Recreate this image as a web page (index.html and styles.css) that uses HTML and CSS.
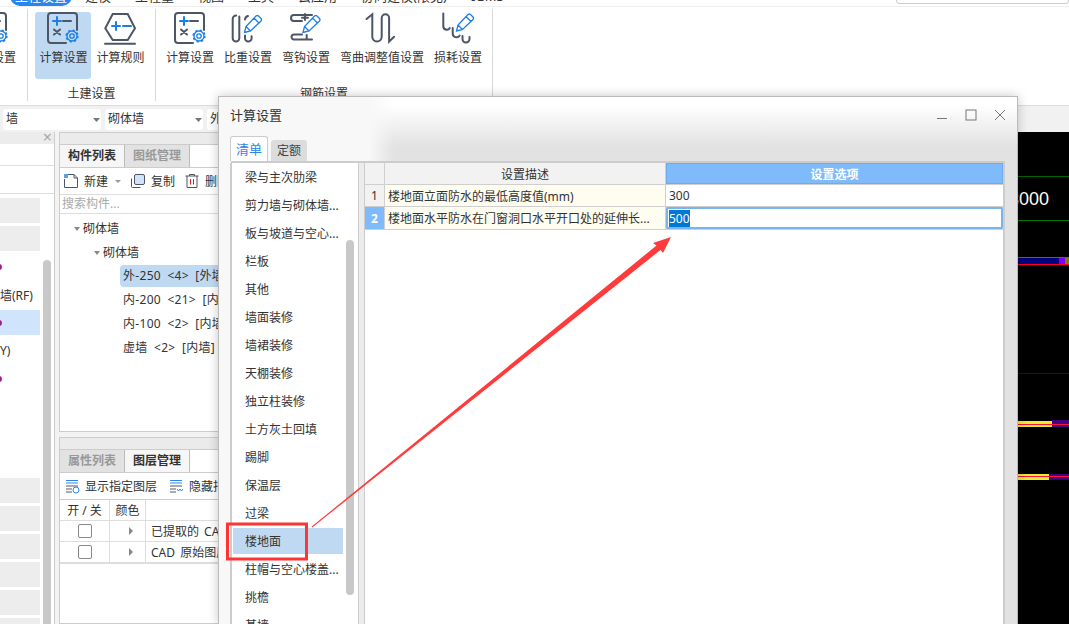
FILE: index.html
```html
<!DOCTYPE html>
<html lang="zh-CN">
<head>
    <meta charset="UTF-8">
    <meta name="viewport" content="width=device-width, initial-scale=1.0">
    <title>计算设置</title>
    <link rel="stylesheet" href="styles.css">
</head>
<body>
    <svg class="defs" width="0" height="0">
        <symbol id="pencil" viewBox="0 0 19 19">
            <path d="M1 18l1.5-6L12.5 1.5a2 2 0 0 1 2.5 0l2.5 2.5a2 2 0 0 1 0 2.5L7 16.500z M10.500 3.500l5 5 M2.500 12l4.500 4.500"/>
        </symbol>
        <symbol id="calc" viewBox="0 0 34 34">
            <path class="dk" d="M20 32H5a3 3 0 0 1-3-3V5a3 3 0 0 1 3-3h23a3 3 0 0 1 3 3v14"/>
            <path class="bl" d="M7 10h8M11 6v8"/>
            <path class="dk" d="M17 10h8M8 18.500l6 5M14 18.500l-6 5"/>
            <circle class="bl thin" cx="26" cy="25" r="2.200"/>
            <circle class="bl thin" cx="26" cy="25" r="5"/>
            <circle class="bl teeth" cx="26" cy="25" r="5.800"/>
        </symbol>
    </svg>

    <div class="app">
        <div class="menubar">
            <div class="menu-inner">
                <span class="menu-item on">工程设置</span>
                <span class="menu-item">建模</span>
                <span class="menu-item">工程量</span>
                <span class="menu-item">视图</span>
                <span class="menu-item">工具</span>
                <span class="menu-item">云应用</span>
                <span class="menu-item">协同建模(限免)</span>
                <span class="menu-item">IGMS</span>
            </div>
            <div class="searchbox">请输入功能名称或问题描述</div>
        </div>

        <div class="ribbon">
            <div class="rgroup rgroup-cut">
                <div class="rbtns">
                    <div class="rbtn">
                        <svg class="ricon"><use href="#calc"/></svg>
                        <span>计算设置</span>
                    </div>
                </div>
            </div>
            <div class="rgroup rgroup-civil">
                <div class="rbtns">
                    <div class="rbtn active">
                        <svg class="ricon"><use href="#calc"/></svg>
                        <span>计算设置</span>
                    </div>
                    <div class="rbtn">
                        <svg class="ricon" viewBox="0 0 34 34">
                            <path class="dk" d="M2.300 17.300L9.700 3h15l7.300 14.300L24.700 29h-15z"/>
                            <path class="bl" d="M9 15h8M13 11v8M20 15h8"/>
                            <path class="dk" d="M2 32.700h30"/>
                        </svg>
                        <span>计算规则</span>
                    </div>
                </div>
                <div class="rgroup-name">土建设置</div>
            </div>
            <div class="rgroup rgroup-rebar">
                <div class="rbtns">
                    <div class="rbtn">
                        <svg class="ricon"><use href="#calc"/></svg>
                        <span>计算设置</span>
                    </div>
                    <div class="rbtn">
                        <svg class="ricon" viewBox="0 0 34 34">
                            <path class="dk" d="M8.300 5.500V27.300a3.300 3.300 0 0 1-6.600 0V8a3.500 3.500 0 0 1 3.500-3.500"/>
                            <path class="dk" d="M14 8.500a4 4 0 0 1 3-3.500M14 24.500v2.800a3.300 3.300 0 0 0 6.600 0v-2"/>
                            <use class="bl thin" href="#pencil" x="12.500" y="3.500" width="19" height="19"/>
                        </svg>
                        <span>比重设置</span>
                    </div>
                    <div class="rbtn">
                        <svg class="ricon" viewBox="0 0 34 34">
                            <path class="dk" d="M23 4H5a3 3 0 0 0 0 6h8M16 3v6M13 6.700h6M13 23.500H5a2.500 2.500 0 0 0 0 5h18M17.700 24v4"/>
                            <use class="bl thin" href="#pencil" x="13" y="3.500" width="19" height="19"/>
                        </svg>
                        <span>弯钩设置</span>
                    </div>
                    <div class="rbtn">
                        <svg class="ricon" viewBox="0 0 34 34">
                            <path class="dk" d="M1.500 8L7.300 3.300V25.700a4.700 4.700 0 0 0 9.400 0V7a3.700 3.700 0 0 1 7.400 0V30.700l5-5"/>
                        </svg>
                        <span>弯曲调整值设置</span>
                    </div>
                    <div class="rbtn">
                        <svg class="ricon" viewBox="0 0 34 34">
                            <path class="dk" d="M2.300 2.500V15a3.500 3.500 0 0 0 6.500 2M11.700 17v5.500a3.800 3.800 0 0 0 7 2M21.500 25v3a3.500 3.500 0 0 0 7 0v-2"/>
                            <use class="bl thin" href="#pencil" x="14.500" y="2" width="19" height="19"/>
                        </svg>
                        <span>损耗设置</span>
                    </div>
                </div>
                <div class="rgroup-name">钢筋设置</div>
            </div>
        </div>

        <div class="filterbar">
            <div class="combo">墙</div>
            <div class="combo">砌体墙</div>
            <div class="combo">外-250</div>
        </div>

        <div class="workspace">
            <div class="nav-panel">
                <div class="nav-head"><span class="nav-close">×</span></div>
                <div class="nav-blank"></div>
                <div class="nav-blank2"></div>
                <div class="nav-list">
                    <div class="nav-row grey"></div>
                    <div class="nav-row grey"></div>
                    <div class="nav-row"><i class="dot"></i></div>
                    <div class="nav-row"><span class="nav-text rf">墙(RF)</span></div>
                    <div class="nav-row sel"><i class="dot"></i></div>
                    <div class="nav-row"><span class="nav-text y">Y)</span></div>
                    <div class="nav-row"><i class="dot"></i></div>
                    <div class="nav-row"></div>
                    <div class="nav-row"></div>
                    <div class="nav-row"></div>
                    <div class="nav-row grey"></div>
                    <div class="nav-row grey"></div>
                    <div class="nav-row grey"></div>
                    <div class="nav-row grey"></div>
                    <div class="nav-row grey"></div>
                    <div class="nav-row grey"></div>
                </div>
                <div class="nav-thumb"></div>
            </div>

            <div class="side-column">
                <div class="side-panel side-top">
                    <div class="strip"></div>
                    <div class="tabs">
                        <div class="ptab on">构件列表</div>
                        <div class="ptab">图纸管理</div>
                    </div>
                    <div class="tools">
                        <span class="tool">
                            <svg class="ticon" viewBox="0 0 16 16">
                                <path class="dk1" d="M5 1.500h6l3.500 3.500v9.500h-13V6"/>
                                <path class="dk1" d="M11 1.500V5h3.500"/>
                                <rect class="dots" x="1" y="1" width="4" height="4"/>
                            </svg>
                            新建<i class="caret"></i>
                        </span>
                        <span class="tool">
                            <svg class="ticon" viewBox="0 0 16 16">
                                <path class="dk1" d="M1.500 5.500v8a1 1 0 0 0 1 1h8"/>
                                <rect class="fillbl" x="4.500" y="1.500" width="10" height="10" rx="1.500"/>
                            </svg>
                            复制
                        </span>
                        <span class="tool">
                            <svg class="ticon" viewBox="0 0 16 16">
                                <path class="dk1" d="M1.500 3h13M5.500 3V1.500h5V3M3 3v11.500h10V3"/>
                                <path class="redbar" d="M6.500 6v5.500M9.500 6v5.500"/>
                            </svg>
                            删除
                        </span>
                    </div>
                    <div class="search">搜索构件...</div>
                    <div class="tree">
                        <div class="node lv1"><i class="tri"></i>砌体墙</div>
                        <div class="node lv2"><i class="tri"></i>砌体墙</div>
                        <div class="node lv3 on">外-250 &lt;4&gt; [外墙]</div>
                        <div class="node lv3">内-200 &lt;21&gt; [内墙]</div>
                        <div class="node lv3">内-100 &lt;2&gt; [内墙]</div>
                        <div class="node lv3">虚墙 &lt;2&gt; [内墙]</div>
                    </div>
                </div>
                <div class="side-panel side-bottom">
                    <div class="strip"></div>
                    <div class="tabs">
                        <div class="ptab">属性列表</div>
                        <div class="ptab on">图层管理</div>
                    </div>
                    <div class="tools tools-layer">
                        <span class="tool">
                            <svg class="ticon" viewBox="0 0 16 16">
                                <path class="blue1" d="M2 2.500h12M2 5h12"/>
                                <path class="dk1" d="M2 8h12M2 11h6M2 14h6"/>
                                <circle class="blue1" cx="12" cy="12" r="3"/>
                            </svg>
                            显示指定图层
                        </span>
                        <span class="tool">
                            <svg class="ticon" viewBox="0 0 16 16">
                                <path class="blue1" d="M2 2.500h12M2 5h12"/>
                                <path class="dk1" d="M2 8h12M2 11h6M2 14h6"/>
                                <path class="blue1" d="M9 11l1.500 2 1.500-2 1.500 2 1.500-2"/>
                            </svg>
                            隐藏指定图层
                        </span>
                    </div>
                    <div class="layers">
                        <div class="lcell head">开 / 关</div>
                        <div class="lcell head">颜色</div>
                        <div class="lcell head"></div>
                        <div class="lcell"><i class="check"></i></div>
                        <div class="lcell"><i class="rtri"></i></div>
                        <div class="lcell left">已提取的 CAD 图层</div>
                        <div class="lcell"><i class="check"></i></div>
                        <div class="lcell"><i class="rtri"></i></div>
                        <div class="lcell left">CAD 原始图层</div>
                    </div>
                </div>
            </div>

            <div class="cad">
                <svg class="cad-draw" width="739" height="492" viewBox="330 132 739 492">
                    <rect x="330" y="176" width="739" height="1" fill="#006400"/>
                    <rect x="330" y="220" width="739" height="1" fill="#007800"/>
                    <text x="1009" y="205" class="cad-label">3000</text>
                    <rect x="330" y="257" width="739" height="1" fill="#7a5a3a"/>
                    <rect x="330" y="258" width="729" height="6" fill="#00007c"/>
                    <rect x="1059" y="258" width="6" height="6" fill="#8000ff"/>
                    <rect x="1065" y="258" width="4" height="6" fill="#808000"/>
                    <rect x="330" y="264" width="739" height="1" fill="#ff0020"/>
                    <rect x="330" y="373" width="739" height="1" fill="#500000"/>
                    <rect x="330" y="421" width="722" height="6" fill="#ecec30"/>
                    <rect x="1052" y="420" width="17" height="7" fill="#400080"/>
                    <rect x="330" y="424" width="739" height="1" fill="#ff1040"/>
                    <rect x="330" y="474" width="719" height="6" fill="#ecec30"/>
                    <rect x="1049" y="474" width="20" height="6" fill="#400080"/>
                    <rect x="330" y="476" width="739" height="1" fill="#ff1040"/>
                </svg>
            </div>
        </div>
    </div>

    <div class="dialog">
        <div class="dlg-title">
            <span class="dlg-name">计算设置</span>
            <div class="dlg-ctrls">
                <svg class="ctrl" viewBox="0 0 12 12"><path d="M1 9.500h10"/></svg>
                <svg class="ctrl" viewBox="0 0 12 12"><rect x="1" y="1" width="10" height="10"/></svg>
                <svg class="ctrl" viewBox="0 0 12 12"><path d="M1 1l10 10M11 1L1 11"/></svg>
            </div>
        </div>
        <div class="dlg-tabs">
            <div class="dtab on">清单</div>
            <div class="dtab">定额</div>
        </div>
        <div class="dlg-body">
            <div class="cat-list">
                <div class="cat">梁与主次肋梁</div>
                <div class="cat">剪力墙与砌体墙...</div>
                <div class="cat">板与坡道与空心...</div>
                <div class="cat">栏板</div>
                <div class="cat">其他</div>
                <div class="cat">墙面装修</div>
                <div class="cat">墙裙装修</div>
                <div class="cat">天棚装修</div>
                <div class="cat">独立柱装修</div>
                <div class="cat">土方灰土回填</div>
                <div class="cat">踢脚</div>
                <div class="cat">保温层</div>
                <div class="cat">过梁</div>
                <div class="cat on">楼地面</div>
                <div class="cat">柱帽与空心楼盖...</div>
                <div class="cat">挑檐</div>
                <div class="cat">基墙</div>
                <div class="cat-thumb"></div>
            </div>
            <div class="splitter"></div>
            <div class="grid-wrap">
                <div class="grid">
                    <div class="gc gh"></div>
                    <div class="gc gh">设置描述</div>
                    <div class="gc gh opt">设置选项</div>
                    <div class="gc gn">1</div>
                    <div class="gc gd">楼地面立面防水的最低高度值(mm)</div>
                    <div class="gc gv">300</div>
                    <div class="gc gn cur">2</div>
                    <div class="gc gd">楼地面水平防水在门窗洞口水平开口处的延伸长...</div>
                    <div class="gc gv edit"><span class="selected">500</span></div>
                </div>
            </div>
        </div>
    </div>

    <!-- 标注 -->
    <svg class="marks" width="1069" height="624" viewBox="0 0 1069 624">
        <polygon points="671,237 653,243 656.500,245.500 311.700,526.600 312.300,527.400 660.500,250 663,253"/>
        <rect x="227.500" y="524" width="79" height="35"/>
    </svg>
</body>
</html>
```

FILE: styles.css
```css
* {
    box-sizing: border-box;
}

body {
    margin: 0;
    width: 1069px;
    height: 624px;
    overflow: hidden;
    position: relative;
    background: #fff;
    color: #333;
    font-family: "Noto Sans", "Noto Sans CJK SC", sans-serif;
    font-size: 12px;
}

.defs {
    position: absolute;
}

.app {
    height: 624px;
    display: flex;
    flex-direction: column;
    overflow: hidden;
}

/* 顶部菜单 */
.menubar {
    height: 7px;
    flex: none;
    overflow: hidden;
    display: flex;
    justify-content: space-between;
    border-bottom: 1px solid #eee;
}

.menu-inner {
    display: flex;
    gap: 24px;
    margin: -14px 0 0 10px;
    font-size: 13px;
    height: 20px;
}

.menu-item {
    line-height: 20px;
    white-space: nowrap;
}

.menu-item.on {
    background: #2b85ee;
    color: #fff;
    padding: 0 5px;
    margin-right: -11px;
    border-radius: 10px;
}

.searchbox {
    width: 173px;
    height: 18px;
    margin-top: -14px;
    border: 1px solid #ccc;
    border-radius: 3px;
    padding-left: 4px;
    color: #999;
    line-height: 16px;
    white-space: nowrap;
    overflow: hidden;
}

/* 功能区 */
.ribbon {
    height: 98px;
    flex: none;
    display: flex;
    padding-top: 2px;
}

.rgroup {
    height: 92px;
    border-right: 1px solid #d8d8d8;
    display: flex;
    flex-direction: column;
    align-items: center;
    position: relative;
}

.rgroup-cut {
    width: 28px;
    overflow: hidden;
    align-items: flex-end;
}

.rgroup-cut .rbtns {
    margin-right: 11px;
}

.rgroup-civil {
    width: 128px;
}

.rgroup-rebar {
    width: 337px;
}

.rbtns {
    display: flex;
    gap: 10px;
    height: 70px;
    padding-top: 3px;
}

.rgroup-civil .rbtns {
    gap: 5px;
    padding-right: 3px;
}

.rbtn {
    display: flex;
    flex-direction: column;
    align-items: center;
    height: 67px;
    white-space: nowrap;
}

.rbtn span {
    line-height: 18px;
    margin-top: 4px;
}

.rbtn.active {
    background: #c0d9f2;
    border-radius: 3px;
    width: 56px;
}

.ricon {
    width: 34px;
    height: 34px;
    margin-top: -1px;
    flex: none;
}

.rgroup-name {
    line-height: 20px;
    margin-top: 5px;
    text-align: center;
}

.dk,
.bl {
    fill: none;
    stroke-linecap: round;
    stroke-width: 2;
}

.dk {
    stroke: #4d5666;
}

.bl {
    stroke: #1c7fe6;
}

.bl.thin {
    stroke-width: 1.300;
}

.bl.teeth {
    stroke-width: 1.600;
    stroke-dasharray: 2.200 2.350;
    stroke-linecap: butt;
}

/* 筛选条 */
.filterbar {
    height: 27px;
    flex: none;
    display: flex;
    gap: 4px;
    padding: 3px 0 0 3px;
    background: #f1f1f1;
    border-top: 1px solid #dcdcdc;
}

.combo {
    width: 98px;
    height: 21px;
    background: #fff url("data:image/svg+xml,%3Csvg xmlns='http://www.w3.org/2000/svg' width='7' height='4'%3E%3Cpath d='M0 0h7L3.500 4z' fill='%23777'/%3E%3C/svg%3E") no-repeat 90px 9px;
    border-radius: 3px;
    padding-left: 3px;
    line-height: 20px;
    font-size: 12px;
}

/* 工作区 */
.workspace {
    flex: 1;
    display: flex;
    min-height: 0;
    background: #f3f3f3;
}

.nav-panel {
    width: 55px;
    flex: none;
    background: #fff;
    border-right: 1px solid #ccc;
    position: relative;
    overflow: hidden;
}

.nav-head {
    height: 12px;
    background: #ececec;
    position: relative;
}

.nav-close {
    position: absolute;
    right: 2px;
    top: -5px;
    font-size: 16px;
    line-height: 20px;
    color: #aaa;
}

.nav-blank {
    height: 22px;
    border-bottom: 1px solid #ddd;
}

.nav-blank2 {
    height: 28px;
    border-bottom: 1px solid #ddd;
}

.nav-list {
    display: flex;
    flex-direction: column;
    gap: 3px;
    width: 40px;
    padding-top: 4px;
}

.nav-row {
    height: 25px;
    flex: none;
    display: flex;
    align-items: center;
}

.nav-row.grey {
    background: #ededed;
}

.nav-row.sel {
    background: #d0e5fb;
}

.dot {
    width: 6px;
    height: 6px;
    margin-left: -4.500px;
    border-radius: 50%;
    background: #a0208c;
}

.nav-text {
    white-space: nowrap;
    margin-left: auto;
}

.nav-text.rf {
    padding-right: 12px;
}

.nav-text.y {
    padding-right: 30px;
}

.nav-thumb {
    position: absolute;
    left: 43px;
    top: 128px;
    width: 8px;
    height: 400px;
    background: #c8c8c8;
    border-radius: 4px;
}

.side-column {
    width: 271px;
    flex: none;
    margin-left: 4px;
    display: flex;
    flex-direction: column;
    gap: 5px;
}

.side-panel {
    background: #fff;
    border: 1px solid #ccc;
}

.side-top {
    height: 300px;
    flex: none;
}

.side-bottom {
    flex: 1;
}

.strip {
    height: 11px;
    background: #ebebeb;
}

.tabs {
    display: flex;
    height: 24px;
    background: #fff;
    border-top: 1px solid #ccc;
    border-bottom: 1px solid #ccc;
}

.ptab {
    width: 65px;
    line-height: 22px;
    text-align: center;
    background: #e2e2e2;
    color: #999;
    font-weight: 700;
    border-right: 1px solid #bbb;
}

.ptab.on {
    background: #f6f6f6;
    color: #333;
}

.tools {
    display: flex;
    gap: 9px;
    height: 27px;
    align-items: center;
    padding-left: 3px;
    border-bottom: 1px solid #ddd;
}

.tool {
    display: flex;
    align-items: center;
    gap: 5px;
    white-space: nowrap;
}

.tools-layer {
    padding-left: 4px;
    gap: 11px;
    border-bottom-color: #ccc;
}

.ticon {
    width: 16px;
    height: 16px;
    flex: none;
}

.dk1,
.blue1,
.redbar,
.fillbl {
    fill: none;
    stroke-width: 1;
}

.dk1 {
    stroke: #4d5666;
}

.blue1 {
    stroke: #2b85ee;
}

.redbar {
    stroke: #d62020;
}

.fillbl {
    fill: #cfe3fa;
    stroke: #4d5666;
}

.dots {
    fill: #5c9ee8;
}

.caret {
    width: 0;
    height: 0;
    margin-left: 2px;
    border-style: solid;
    border-width: 3px 3px 0;
    border-color: #999 transparent transparent;
}

.search {
    height: 19px;
    line-height: 18px;
    padding-left: 2px;
    color: #aaa;
    border-bottom: 1px solid #ddd;
}

.tree {
    padding-top: 3px;
}

.node {
    height: 24px;
    line-height: 24px;
    white-space: nowrap;
    display: flex;
    align-items: center;
}

.tri {
    width: 0;
    height: 0;
    margin-right: 3px;
    border-style: solid;
    border-width: 4px 3.500px 0;
    border-color: #888 transparent transparent;
}

.lv1 {
    padding-left: 14px;
}

.lv2 {
    padding-left: 34px;
}

.lv3 {
    margin-left: 60px;
    padding-left: 3px;
    height: 22px;
    margin-bottom: 2px;
    white-space: pre;
    letter-spacing: 0.300px;
    word-spacing: 3px;
}

.lv3.on {
    background: #c0d9f2;
    border-radius: 4px 0 0 4px;
}

.layers {
    display: grid;
    grid-template-columns: 50px 36px 1fr;
    grid-auto-rows: 21px;
    border-bottom: 1px solid #ddd;
}

.lcell {
    display: flex;
    align-items: center;
    justify-content: center;
    border-right: 1px solid #ddd;
    border-bottom: 1px solid #ddd;
    white-space: nowrap;
    overflow: hidden;
}

.lcell.left {
    justify-content: flex-start;
    padding-left: 5px;
    word-spacing: 2px;
}

.check {
    width: 14px;
    height: 14px;
    border: 1px solid #888;
    border-radius: 2px;
}

.rtri {
    width: 0;
    height: 0;
    margin-left: 6px;
    border-style: solid;
    border-width: 4px 0 4px 4.500px;
    border-color: transparent transparent transparent #888;
}

.cad {
    flex: 1;
    background: #000;
    overflow: hidden;
}

.cad-draw {
    display: block;
}

.cad-label {
    fill: #fff;
    font-family: "Liberation Sans", sans-serif;
    font-size: 18px;
}

/* 弹窗 */
.dialog {
    position: absolute;
    left: 218px;
    top: 96px;
    width: 800px;
    height: 528px;
    overflow: hidden;
    border: 1px solid #bbb;
    border-bottom: 0;
    background:
        linear-gradient(90deg, #f8f8f8 0, #f8f8f8 150px, rgba(248, 248, 248, 0) 175px),
        linear-gradient(180deg, #fff 8px, #e2e2e2 50px);
    box-shadow: 0 0 10px rgba(0, 0, 0, 0.22);
    padding: 0 12px;
}

.dlg-title {
    height: 39px;
    display: flex;
    align-items: center;
    justify-content: space-between;
    font-size: 13px;
    padding-bottom: 4px;
    margin-right: -1px;
}

.dlg-name {
    margin-left: -1px;
}

.dlg-ctrls {
    display: flex;
    gap: 17px;
}

.ctrl {
    width: 12px;
    height: 12px;
    fill: none;
    stroke: #777;
    stroke-width: 1;
}

.dlg-tabs {
    display: flex;
    height: 25px;
    gap: 3px;
    align-items: flex-end;
    margin-left: -1px;
}

.dtab {
    width: 36px;
    height: 21px;
    line-height: 21px;
    text-align: center;
    background: #dcdcdc;
    color: #444;
    border-radius: 3px 3px 0 0;
}

.dtab.on {
    width: 38px;
    height: 25px;
    line-height: 25px;
    background: #fff;
    color: #2b85ee;
    font-size: 13px;
    border: 1px solid #ccc;
    border-bottom: 0;
}

.dlg-body {
    display: flex;
    height: 480px;
    border-top: 2px solid #ccc;
}

.cat-list {
    width: 128px;
    flex: none;
    margin-left: -1px;
    background: #fff;
    border-left: 2px solid #ccc;
    padding: 1px 0 0 1px;
    position: relative;
}

.cat {
    width: 110px;
    height: 26px;
    margin-bottom: 2px;
    line-height: 28px;
    padding-left: 12px;
    white-space: nowrap;
}

.cat.on {
    background: #c0d9f2;
}

.cat-thumb {
    position: absolute;
    left: 114px;
    top: 77px;
    width: 8px;
    height: 355px;
    border-radius: 4px;
    background: #c8c8c8;
}

.splitter {
    width: 7px;
    flex: none;
    background: #ececec;
    border-left: 1px solid #ccc;
    border-right: 1px solid #ccc;
}

.grid-wrap {
    flex: 1;
    background: #fff;
    border-right: 2px solid #ccc;
}

.grid {
    display: grid;
    grid-template-columns: 19px 280px 1fr;
    grid-template-rows: 21px 21px 22px;
    gap: 1px;
    background: #cfcfcf;
    border-bottom: 1px solid #cfcfcf;
}

.gc {
    display: flex;
    align-items: center;
    padding-left: 3px;
    white-space: nowrap;
    overflow: hidden;
}

.gh {
    background: #f2f2f2;
    justify-content: center;
    padding-left: 0;
}

.gh.opt {
    background: #7fbafa;
    color: #fff;
    font-weight: 700;
    box-shadow: inset 0 0 0 1px #6eaaee;
}

.gn {
    background: #f2f2f2;
    justify-content: center;
    padding-left: 0;
}

.gn.cur {
    background: #7fbafa;
    color: #fff;
    font-weight: 700;
}

.gd {
    background: #fffdef;
}

.gv {
    background: #fff;
}

.gv.edit {
    border: 2px solid #7ab4ee;
    border-radius: 2px;
    padding-left: 1px;
}

.selected {
    background: #0078d7;
    color: #fff;
    line-height: 17px;
}

/* 红色标注 */
.marks {
    position: absolute;
    left: 0;
    top: 0;
    pointer-events: none;
}

.marks polygon {
    fill: #ff3b3b;
}

.marks rect {
    fill: none;
    stroke: #ff3535;
    stroke-width: 3;
}
```
